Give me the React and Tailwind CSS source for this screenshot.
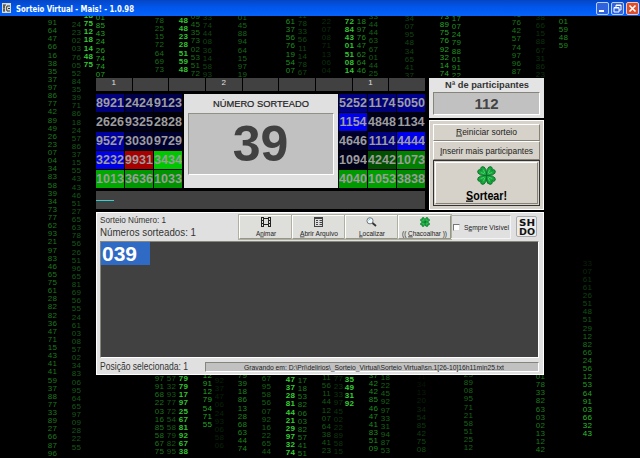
import React from 'react';
import clsx from 'clsx';

// Falling number streams: x is the left edge, y the centre of the first pair
const streams = [
  { x: 48, y: 23, c: '#1d781d', n: '91 64 47 66 16 38 35 37 97 86 77 42 89 49 26 23 07 04 34 83 58 39 34 73 77 62 93 21 97 83 46 65 75 61 28 82 82 36 47 71 15 43 41 41 59 37 88 77 33 89 27 66 87 96' },
  { x: 72, y: 25, c: '#175819', n: '24 23 02 03 76 05 52 84 35 39 71 86 18 24 57 86 37 15 55 43 43 46 51 27 65 63 78 56 26 51 96 65 81 69 56 55 24 61 03 08 57 02 34 83 06 95 64 65 97 09 28 22 55' },
  { x: 84, y: 16, c: '#35c835', b: true, n: '18 75 12 18 14 48 75' },
  { x: 96, y: 18, c: '#24a324', n: '01 85 43 24 26 74 74 07' },
  { x: 155, y: 21, c: '#1a6c1a', n: '78 25 15 72 64 69 73' },
  { x: 179, y: 21, c: '#32c432', b: true, n: '48 48 23 28 51 59 48' },
  { x: 191, y: 17, c: '#1b6e1b', n: '09 45 35 73 02 53 51 72' },
  { x: 203, y: 18, c: '#104510', n: '33 74 44 08 36 14 58 93' },
  { x: 238, y: 18, c: '#186618', n: '01 45 88 94 64 15 97 19' },
  { x: 286, y: 22, c: '#1f8e1f', n: '61 37 56 76 19 54 07' },
  { x: 298, y: 16, c: '#114911', n: '11 78 33 56 11 14 78 67' },
  { x: 322, y: 22, c: '#0a2e0a', n: '22 07 08 71 13 06 04' },
  { x: 345, y: 22, c: '#32c432', b: true, n: '72 84 43 01 51 08 14' },
  { x: 357, y: 22, c: '#1f891f', n: '18 97 76 47 62 64 46' },
  { x: 369, y: 17, c: '#176017', n: '33 44 44 63 67 01 44 25' },
  { x: 405, y: 19, c: '#104610', n: '34 07 95 48 34 65 41 37' },
  { x: 440, y: 17, c: '#24a824', n: '73 89 75 76 92 32 14 74' },
  { x: 452, y: 19, c: '#1f911f', n: '17 07 24 79 88 01 91 22' },
  { x: 512, y: 15, c: '#1b761b', n: '41 76 42 57 74 97 96 87' },
  { x: 536, y: 18, c: '#0b320b', n: '38 66 15 88 67 31 86 23' },
  { x: 559, y: 22, c: '#1f8b1f', n: '01 59 48 59' },
  { x: 155, y: 379, c: '#1b741b', n: '97 91 68 22 03 16 85 58 67 75' },
  { x: 167, y: 379, c: '#155b15', n: '57 32 93 77 72 54 58 79 82 95' },
  { x: 179, y: 379, c: '#32c432', b: true, n: '79 79 17 97 25 67 81 92 67 38' },
  { x: 203, y: 376, c: '#24a524', n: '12 91 12 79 54 71 55' },
  { x: 215, y: 381, c: '#072407', n: '92 37 47 06 24 93 06 58 06' },
  { x: 238, y: 376, c: '#1d831d', n: '79 39 18 86 13 28 68 63 44 74' },
  { x: 262, y: 379, c: '#166116', n: '67 95 58 56 07 92 16 22 65 44' },
  { x: 286, y: 380, c: '#35d035', b: true, n: '47 37 28 81 44 21 29 97 32 74' },
  { x: 298, y: 381, c: '#1c7c1c', n: '17 18 53 82 06 03 82 57 41 51' },
  { x: 322, y: 378, c: '#165a16', n: '11 56 11 44 12 07 64 38 41 23' },
  { x: 334, y: 379, c: '#0c360c', n: '77 23 33 97 45 02 22 89 58 15' },
  { x: 345, y: 380, c: '#35d035', b: true, n: '35 49 31 92' },
  { x: 369, y: 376, c: '#1f8b1f', n: '37 42 42 85 46 47 41 83 51 09' },
  { x: 381, y: 378, c: '#176417', n: '18 22 45 92 97 33 31 94 87 53' },
  { x: 417, y: 377, c: '#145614', fade: true, n: '11 34 13 20 34 54 85 42 75 08' },
  { x: 464, y: 375, c: '#176417', n: '23 89 08 95 71 21 58 51 25 12' },
  { x: 536, y: 377, c: '#1c7c1c', n: '01 78 33 82 63 03 02 13 12 42' },
  { x: 583, y: 263.5, c: '#30d030', fade: true, n: '33 07 61 61 26 51 48 51 29 12 82 66 24 56 12 53 64 91 03 66 32 43' },
];

const leftBoard = [
  ['8921', 'bg-[#00007c]'], ['2424', 'bg-[#00004a]'], ['9123', 'bg-[#00004a]'],
  ['2626', 'bg-[#000008]'], ['9325', 'bg-[#000018]'], ['2828', 'bg-[#000008]'],
  ['9527', 'bg-[#0000a0]'], ['3030', 'bg-[#000030]'], ['9729', 'bg-[#000030]'],
  ['3232', 'bg-[#0000e6]'], ['9931', 'bg-[#a80000]'], ['3434', 'bg-[#00c800]'],
  ['1013', 'bg-[#00a800]'], ['3636', 'bg-[#009800]'], ['1033', 'bg-[#009400]'],
];

const rightBoard = [
  ['5252', 'bg-[#000080]'], ['1174', 'bg-[#000078]'], ['5050', 'bg-[#000090]'],
  ['1154', 'bg-[#0000f0]'], ['4848', 'bg-[#000018]'], ['1134', 'bg-[#000014]'],
  ['4646', 'bg-[#000028]'], ['1114', 'bg-[#000080]'], ['4444', 'bg-[#0000ec]'],
  ['1094', 'bg-[#000018]'], ['4242', 'bg-[#005000]'], ['1073', 'bg-[#008200]'],
  ['4040', 'bg-[#009a00]'], ['1053', 'bg-[#00a000]'], ['3838', 'bg-[#008c00]'],
];

const scale = ['1', '', '', '2', '', '', '', '1', ''];

function Stream({ x, y, c, b, fade, n }) {
  const pairs = n.split(' ');
  return (
    <div
      className={clsx(
        'absolute flex w-[9px] flex-col items-center text-[8px] leading-[8.13px] tracking-[0.2px]',
        b && 'font-bold'
      )}
      style={{ left: x, top: y - 20, color: c }}
    >
      {pairs.map((pair, i) => (
        <div key={i} style={fade ? { opacity: 0.15 + (0.85 * i) / pairs.length } : undefined}>
          {pair}
        </div>
      ))}
    </div>
  );
}

// Squeezes or stretches a label to the narrow bitmap-font width
function Label({ width, children, className }) {
  return (
    <svg width={width} height="11" className={clsx('shrink-0 overflow-visible', className)}>
      <text x="0" y="8.5" textLength={width} lengthAdjust="spacingAndGlyphs" fill="currentColor">
        {children}
      </text>
    </svg>
  );
}

function U({ children }) {
  return <tspan textDecoration="underline">{children}</tspan>;
}

function Clover({ size }) {
  return (
    <svg width={size} height={size} viewBox="0 0 20 20">
      <path d="M10 10 Q10 15 11.5 18.5" stroke="#0b6427" strokeWidth="1.4" fill="none" />
      {[45, 135, 225, 315].map((angle) => (
        <g key={angle} transform={`rotate(${angle} 10 10)`}>
          <path
            d="M10 10.5 L6 5 Q4.4 1.4 7 0 Q9.3 -.6 10 2 Q10.7 -.6 13 0 Q15.6 1.4 14 5 Z"
            fill="#16a63c"
            stroke="#08702a"
            strokeWidth=".9"
          />
          <path d="M8 3.5 L9.6 7 M12 3.5 L10.4 7" stroke="#4fd46c" strokeWidth=".9" />
        </g>
      ))}
    </svg>
  );
}

function FilmIcon() {
  return (
    <svg width="10" height="10" viewBox="0 0 10 10" fill="none" stroke="#222" strokeWidth="1">
      <path d="M.5 0 V10 M9.5 0 V10 M2.5 0 V10 M7.5 0 V10 M2.5 1.5 H7.5 M2.5 7.5 H7.5" />
      <path d="M0 .5 H3 M0 3.5 H3 M0 6.5 H3 M0 9.5 H3 M7 .5 H10 M7 3.5 H10 M7 6.5 H10 M7 9.5 H10" />
    </svg>
  );
}

function FileIcon() {
  return (
    <svg width="10" height="10" viewBox="0 0 10 10" fill="none" stroke="#444" strokeWidth="1">
      <rect x=".5" y=".5" width="8" height="9" fill="#ddd" />
      <path d="M0 1.5 H9 M2 3.5 H4 M2 5.5 H4 M2 7.5 H4 M5.5 3.5 H8 M5.5 5.5 H8 M5.5 7.5 H8" />
    </svg>
  );
}

function SearchIcon() {
  return (
    <svg width="11" height="10" viewBox="0 0 11 10" fill="none">
      <circle cx="4" cy="3.8" r="3.1" fill="#eefaff" stroke="#777" />
      <path d="M6.5 6 L10 9" stroke="#333" strokeWidth="1.8" />
      <path d="M2.5 3.5 Q3 2.2 4.4 2" stroke="#6ac2d4" />
    </svg>
  );
}

function ToolButton({ icon, children, width }) {
  return (
    <button className="flex h-[24px] w-[53px] flex-col items-center border border-t-white border-l-white border-r-[#95958a] border-b-[#95958a] bg-[#dededa] pt-px text-[8px] outline outline-[#b0b0a0]">
      <span className="flex h-[10px] items-center">{icon}</span>
      <Label width={width}>{children}</Label>
    </button>
  );
}

function Board({ cells }) {
  return (
    <div className="grid w-[86px] grid-cols-3 grid-rows-5 gap-x-px gap-y-[1.5px] bg-black">
      {cells.map(([value, color]) => (
        <div
          key={value}
          className={clsx(
            'flex items-center justify-center overflow-hidden text-[12.5px] leading-none font-bold text-[#9d9d9d]',
            color
          )}
        >
          {value}
        </div>
      ))}
    </div>
  );
}

function TitleBar() {
  return (
    <header className="relative flex h-4 items-center bg-linear-to-b from-[#0645c4] via-[#0058ee] to-[#0662fb] pl-[2px] pr-px text-white">
      <svg width="9" height="10" viewBox="0 0 9 10">
        <rect width="9" height="10" fill="#d8dcd8" />
        <path d="M1 2 H4 M1 4 H3 M1 7 H3 M5 3 Q4 5 5 8 H8 M5 3 H8 M6 5.5 H8 M2 2 V9" stroke="#333" fill="none" />
      </svg>
      <div className="ml-[5px] flex-1 font-['DejaVu_Sans_Condensed','DejaVu_Sans',sans-serif] text-[9px] font-bold">
        <Label width={118} className="block">
          Sorteio Virtual - Mais! - 1.0.98
        </Label>
      </div>
      <div className="flex gap-[2px]">
        <span className="flex h-[13px] w-[13px] items-end rounded-[2px] border border-[#bccdf5] bg-[#2f62dc] p-[2px]">
          <span className="h-[2px] w-[5px] bg-white" />
        </span>
        <span className="flex h-[13px] w-[13px] items-center justify-center rounded-[2px] border border-[#bccdf5] bg-[#2f62dc]">
          <svg width="9" height="9" viewBox="0 0 9 9" fill="none" stroke="#fff">
            <path d="M3 3 V1 H8 V6 H6 M3 1.5 H8" />
            <path d="M1 3.5 H6 V8 H1 Z M1 4 H6" />
          </svg>
        </span>
        <span className="flex h-[13px] w-[13px] items-center justify-center rounded-[2px] border border-[#f0c8bc] bg-[#dc4f2c]">
          <svg width="9" height="9" viewBox="0 0 9 9" stroke="#fff" strokeWidth="1.6">
            <path d="M1.5 1.5 L7.5 7.5 M7.5 1.5 L1.5 7.5" />
          </svg>
        </span>
      </div>
    </header>
  );
}

function DrawPanel() {
  return (
    <section className="flex w-[329px] flex-col">
      <div className="grid h-[13px] grid-cols-9 gap-px">
        {scale.map((mark, i) => (
          <div key={i} className="bg-[#414141] text-center text-[8px] leading-[10px] text-[#e0e0e0]">
            {mark}
          </div>
        ))}
      </div>
      <div className="mt-[3px] flex h-[94px] justify-between">
        <Board cells={leftBoard} />
        <div className="flex w-[154px] flex-col bg-[#e0e0e0] px-1 pt-[4px]">
          <h1 className="flex h-[15px] justify-center text-[9.5px] text-[#222]">
            <Label width={96} className="[stroke:currentColor] [stroke-width:.2px]">NÚMERO SORTEADO</Label>
          </h1>
          <div className="flex h-[62px] items-center justify-center border border-t-[#909088] border-l-[#909088] border-r-white border-b-white bg-[#c1c1c1] text-[50px] leading-none font-bold text-[#414141]">
            39
          </div>
        </div>
        <Board cells={rightBoard} />
      </div>
      <div className="mt-[3px] flex h-[18px] items-center bg-[#414141]">
        <div className="h-px w-[18px] bg-[#35cfcf]" />
      </div>
    </section>
  );
}

function SidePanel() {
  return (
    <aside className="flex w-[115px] flex-col gap-[2px]">
      <div className="h-[40px] bg-[#e4e4e4] px-[4px] pt-px text-[#333]">
        <div className="flex h-[13px] justify-center text-[9.5px] font-bold">
          <Label width={84}>Nª de participantes</Label>
        </div>
        <div className="flex h-[23px] items-center justify-center border border-t-[#85857c] border-l-[#85857c] border-r-white border-b-white bg-[#c1c1c1] text-[15px] leading-none font-bold text-[#444]">
          112
        </div>
      </div>
      <div className="h-[90px] border border-white bg-[#d6d2c9] px-[3px] pt-[3px] text-[9.5px] text-[#222]">
        <button className="flex h-[17px] w-full items-start justify-center border border-t-white border-l-white border-r-[#85827a] border-b-[#85827a] pt-px">
          <Label width={61}><U>R</U>einiciar sorteio</Label>
        </button>
        <button className="flex h-[19px] w-full items-start justify-center border border-t-white border-l-white border-r-[#85827a] border-b-[#85827a] pt-[3px]">
          <Label width={93}><U>I</U>nserir mais participantes</Label>
        </button>
        <button className="flex h-[46px] w-full flex-col items-center border border-[#333] p-px">
          <span className="flex h-full w-full flex-col items-center border border-t-white border-l-white border-r-[#85827a] border-b-[#85827a] pt-[3px]">
            <Clover size={19} />
            <span className="pt-[6px] text-[12.5px] leading-none font-bold text-black">
              <Label width={41}><U>S</U>ortear!</Label>
            </span>
          </span>
        </button>
      </div>
    </aside>
  );
}

function ResultPanel() {
  return (
    <section className="mt-[2px] h-[163px] border border-white bg-[#e0e0e0] pl-[3px] pr-1">
      <div className="flex h-[28px]">
        <div className="w-[139px] pt-px text-[#333]">
          <div className="flex h-[12px] text-[9px]"><Label width={66}>Sorteio Número: 1</Label></div>
          <div className="flex h-[12px] pt-px text-[10.5px]"><Label width={96}>Números sorteados: 1</Label></div>
        </div>
        <div className="flex items-start pt-[2px] text-[#222]">
          <ToolButton icon={<FilmIcon />} width={20}>A<U>n</U>imar</ToolButton>
          <ToolButton icon={<FileIcon />} width={38}><U>A</U>brir Arquivo</ToolButton>
          <ToolButton icon={<SearchIcon />} width={26}><U>L</U>ocalizar</ToolButton>
          <ToolButton icon={<Clover size={10} />} width={45}>(( <U>C</U>hacoalhar ))</ToolButton>
          <div className="flex h-[24px] w-[60px] items-center gap-[4px] border border-l-0 border-t-[#b5b5b0] border-r-[#f4f4f4] border-b-[#f4f4f4] pl-[2px] text-[8px]">
            <span className="h-[7px] w-[7px] shrink-0 border border-t-[#777] border-l-[#777] border-r-[#ddd] border-b-[#ddd] bg-white" />
            <Label width={45} className="mb-px">S<U>e</U>mpre Visível</Label>
          </div>
          <div className="mt-px ml-[5px] flex h-[21px] w-[21px] flex-col items-center justify-center rounded-[2px] border border-[#aaa] bg-[#ececec] font-['DejaVu_Sans',sans-serif] text-[9.5px] font-bold text-[#111]">
            <Label width={16} className="-mb-[2px]">SH</Label>
            <Label width={16}>DO</Label>
          </div>
        </div>
      </div>
      <div className="h-[117px] border border-t-[#85857c] border-l-[#85857c] border-r-white border-b-white bg-[#414141]">
        <div className="flex h-[23px] w-[49px] items-center bg-[#2f6ac5] pl-px text-[21px] leading-none font-bold text-white">
          <svg width="35" height="20">
            <text x="0" y="16.5" textLength="35" fill="currentColor">039</text>
          </svg>
        </div>
      </div>
      <div className="flex h-[16px] items-center text-[#333]">
        <div className="flex w-[105px] text-[10px]"><Label width={88}>Posição selecionada: 1</Label></div>
        <div className="mt-[2px] flex h-[10px] flex-1 items-center justify-center border border-t-[#85857c] border-l-[#85857c] border-r-white border-b-white bg-[#c1c1c1] pl-1 text-[8px] text-[#222]">
          <Label width={260} className="mb-px">Gravando em: D:\Pri\delirios\_Sorteio_Virtual\Sorteio Virtual\sn.1[26-10]16h11min25.txt</Label>
        </div>
      </div>
    </section>
  );
}

export default function App() {
  return (
    <div className="relative h-[458px] w-[640px] overflow-hidden bg-black font-['Liberation_Sans',Arial,sans-serif]">
      <div className="absolute inset-x-0 top-4 bottom-0 overflow-hidden">
        {streams.map((stream) => (
          <Stream key={`${stream.x}-${stream.y}`} {...stream} />
        ))}
      </div>
      <TitleBar />
      <main className="relative mt-[61px] ml-24 w-[448px] bg-black pt-px">
        <div className="flex justify-between">
          <DrawPanel />
          <SidePanel />
        </div>
        <ResultPanel />
      </main>
    </div>
  );
}
